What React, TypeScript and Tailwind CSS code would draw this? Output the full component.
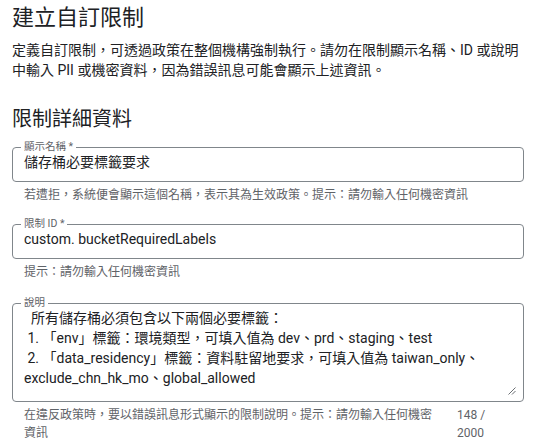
import React from "react";

function Field({
  label,
  value,
  hint,
  className,
}: {
  label: string;
  value: string;
  hint: string;
  className?: string;
}) {
  return (
    <div className={className}>
      <div className="relative rounded-[4px] border border-[#80868b] pl-[11px] pr-[12px] pt-[4px] pb-[9px]">
        <span className="absolute -top-[1px] left-[8px] -translate-y-1/2 bg-white px-[3px] text-[10.5px] leading-[12px] text-[#5f6368]">
          {label}
        </span>
        <div className="text-[14px] leading-[20px] text-[#202124]">{value}</div>
      </div>
      <p className="mt-[4px] pl-[12px] text-[12px] leading-[18px] text-[#5f6368]">{hint}</p>
    </div>
  );
}

const description = [
  "  所有儲存桶必須包含以下兩個必要標籤：",
  " 1. 「env」標籤：環境類型，可填入值為 dev、prd、staging、test",
  " 2. 「data_residency」標籤：資料駐留地要求，可填入值為 taiwan_only、exclude_chn_hk_mo、global_allowed",
].join("\n");

export default function App() {
  return (
    <div className="h-[448px] w-[540px] overflow-hidden bg-white pl-[12px] pr-[16px] font-[Roboto,'Noto_Sans_CJK_TC',sans-serif] text-[#202124]">
      {/* 頁首 */}
      <h1 className="pt-[4px] text-[22px] leading-[28px] font-normal">建立自訂限制</h1>
      <p className="mt-[8px] text-[14px] leading-[20px]">
        定義自訂限制，可透過政策在整個機構強制執行。請勿在限制顯示名稱、ID 或說明中輸入 PII 或機密資料，因為錯誤訊息可能會顯示上述資訊。
      </p>

      <h2 className="mt-[25px] text-[20px] leading-[28px] font-normal">限制詳細資料</h2>

      {/* 表單欄位 */}
      <Field
        className="mt-[14px]"
        label="顯示名稱 *"
        value="儲存桶必要標籤要求"
        hint="若遭拒，系統便會顯示這個名稱，表示其為生效政策。提示：請勿輸入任何機密資訊"
      />
      <Field
        className="mt-[20px]"
        label="限制 ID *"
        value="custom. bucketRequiredLabels"
        hint="提示：請勿輸入任何機密資訊"
      />

      <div className="mt-[22px]">
        <div className="relative rounded-[4px] border border-[#80868b] pl-[11px] pr-[12px] pt-[4px] pb-[13px]">
          <span className="absolute -top-[1px] left-[8px] -translate-y-1/2 bg-white px-[3px] text-[10.5px] leading-[12px] text-[#5f6368]">
            說明
          </span>
          <div className="whitespace-pre-wrap text-[14px] leading-[20px] text-[#202124]">{description}</div>
          <svg
            className="absolute bottom-[6px] right-[7px] h-[8px] w-[8px]"
            viewBox="0 0 8 8"
            fill="none"
            stroke="#6b6f73"
            strokeWidth="1"
          >
            <path d="M7.5 0.5 L0.5 7.5" />
            <path d="M7.5 4 L4 7.5" />
          </svg>
        </div>
        <div className="mt-[4px] flex pl-[12px] text-[12px] leading-[18px] text-[#5f6368]">
          <p className="w-[416px] shrink-0">
            在違反政策時，要以錯誤訊息形式顯示的限制說明。提示：請勿輸入任何機密資訊
          </p>
          <span className="ml-[17px] w-[36px] shrink-0">148 / 2000</span>
        </div>
      </div>
    </div>
  );
}
